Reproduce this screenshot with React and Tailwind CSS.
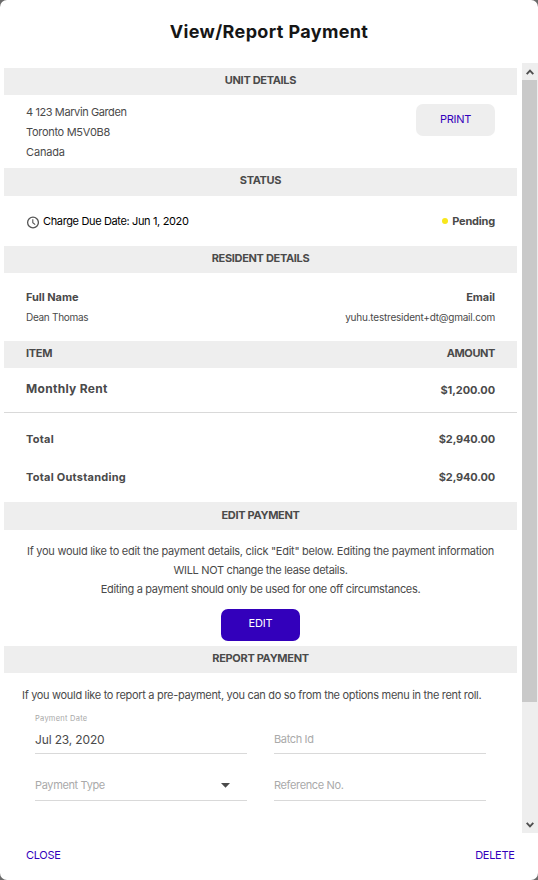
import React, { useState } from 'react';
import clsx from 'clsx';

const SectionBar = ({ children, className }) => (
  <div
    className={clsx(
      'flex items-center bg-[#eeeeee] text-[11px] font-bold tracking-[-0.32px]',
      className
    )}
  >
    {children}
  </div>
);

const Field = ({ label, floating, value, caret, className }) => (
  <div className={clsx('flex flex-col justify-end border-b border-[#d9d9d9]', className)}>
    {floating && (
      <span className="text-[7.5px] leading-[10px] tracking-[0.25px] text-[#a8a8a8]">{floating}</span>
    )}
    {value ? (
      <span className="pt-[8px] pb-[5px] text-[12px] leading-4 tracking-[-0.15px] text-[#4a4a4a]">{value}</span>
    ) : (
      <span className="flex items-center justify-between pr-[17px] text-[11px] leading-4 tracking-[-0.36px] text-[#aaaaaa]">
        {label}
        {caret && (
          <svg width="9" height="5" viewBox="0 0 9 5" fill="#4a4a4a">
            <path d="M0 0h9L4.5 4.8z" />
          </svg>
        )}
      </span>
    )}
  </div>
);

const Scrollbar = () => (
  <div className="flex w-4 flex-col bg-[#eeeeee]">
    <div className="flex h-[17px] items-center justify-center pt-px pr-px">
      <svg width="8" height="6" viewBox="0 0 8 6" fill="none" stroke="#505050" strokeWidth="1.9">
        <path d="M0.7 5.2L4 1.7L7.3 5.2" />
      </svg>
    </div>
    <div className="mr-px h-[622px] bg-[#c9c9c9]" />
    <div className="mt-auto flex h-[17px] items-center justify-center pr-px">
      <svg width="8" height="6" viewBox="0 0 8 6" fill="none" stroke="#505050" strokeWidth="1.9">
        <path d="M0.7 0.8L4 4.3L7.3 0.8" />
      </svg>
    </div>
  </div>
);

const App = () => {
  const [date] = useState('Jul 23, 2020');

  return (
    <div className="h-[880px] w-[538px] bg-[#6b6b6b] font-['Inter',sans-serif]">
      <div className="flex h-full flex-col overflow-hidden rounded-[7px] bg-white text-[11px] tracking-[-0.3px] text-[#4a4a4a]">
        <h1 className="flex h-[63px] items-center justify-center text-[18px] font-bold tracking-[0.36px] text-[#161616]">
          View/Report Payment
        </h1>

        <div className="flex h-[770px]">
          <div className="flex-1 overflow-hidden pt-[5px] pr-[5px] pl-1">
            <SectionBar className="h-[27px] justify-center pb-[3px]">UNIT DETAILS</SectionBar>
            <div className="flex h-[73px] justify-between pt-[7px] pr-[22px] pl-[22px]">
              <div className="leading-5">
                <p className="tracking-[-0.4px]">4 123 Marvin Garden</p>
                <p>Toronto M5V0B8</p>
                <p className="tracking-[-0.15px]">Canada</p>
              </div>
              <button className="mt-[2px] h-8 w-[79px] rounded-[7px] bg-[#eeeeee] pb-[2px] text-[#3300bb]">
                PRINT
              </button>
            </div>

            <SectionBar className="h-[28px] justify-center pb-[3px]">STATUS</SectionBar>
            <div className="flex h-[50px] items-center justify-between px-[22px]">
              <div className="flex items-center tracking-[-0.36px] text-black">
                <svg className="mt-[2px] mr-[4px]" width="13" height="13" viewBox="0 0 13 13" fill="none" stroke="#555555">
                  <circle cx="7" cy="6.5" r="5.4" strokeWidth="1.3" />
                  <path d="M6.8 3.2V6.7L9.2 8.6" strokeWidth="1.1" />
                </svg>
                Charge Due Date: Jun 1, 2020
              </div>
              <div className="flex items-center gap-1 font-bold tracking-[-0.2px]">
                <span className="size-[6px] rounded-full bg-[#f8e71c]" />
                Pending
              </div>
            </div>

            <SectionBar className="h-[27px] justify-center pb-[3px]">RESIDENT DETAILS</SectionBar>
            <div className="flex h-[68px] justify-between px-[22px] pt-[14px] leading-5">
              <div>
                <p className="font-bold tracking-[-0.05px]">Full Name</p>
                <p className="text-[10px]">Dean Thomas</p>
              </div>
              <div className="text-right">
                <p className="font-bold tracking-[-0.05px]">Email</p>
                <p className="text-[10px] tracking-[-0.22px]">yuhu.testresident+dt@gmail.com</p>
              </div>
            </div>

            <SectionBar className="h-[27px] justify-between px-[22px] pb-[3px]">
              <span>ITEM</span>
              <span className="tracking-[-0.4px]">AMOUNT</span>
            </SectionBar>
            <div className="flex h-[45px] justify-between border-b border-[#d9d9d9] px-[22px] pt-[11px] font-bold">
              <span className="text-[12px] leading-5 tracking-[0.3px]">Monthly Rent</span>
              <span className="leading-[22px] tracking-[-0.08px]">$1,200.00</span>
            </div>
            <div className="flex h-[89px] flex-col gap-[18px] px-[22px] pt-4 font-bold leading-5 tracking-[0.25px]">
              <div className="flex justify-between">
                <span>Total</span>
                <span className="tracking-[-0.15px]">$2,940.00</span>
              </div>
              <div className="flex justify-between">
                <span>Total Outstanding</span>
                <span className="tracking-[-0.15px]">$2,940.00</span>
              </div>
            </div>

            <SectionBar className="h-[28px] justify-center pb-px">EDIT PAYMENT</SectionBar>
            <div className="flex h-[116px] flex-col items-center pt-3 text-center">
              <div className="leading-[19px] tracking-[-0.33px] whitespace-nowrap">
                <p className="tracking-[-0.27px]">If you would like to edit the payment details, click "Edit" below. Editing the payment information</p>
                <p>WILL NOT change the lease details.</p>
                <p>Editing a payment should only be used for one off circumstances.</p>
              </div>
              <button className="mt-[10px] h-8 w-[79px] shrink-0 rounded-[7px] bg-[#3300bb] pb-[3px] tracking-[-0.1px] text-white">
                EDIT
              </button>
            </div>

            <SectionBar className="h-[27px] justify-center pb-[3px]">REPORT PAYMENT</SectionBar>
            <p className="pt-3 pl-[18px] leading-5 tracking-[-0.315px] whitespace-nowrap">
              If you would like to report a pre-payment, you can do so from the options menu in the rent roll.
            </p>
            <div className="grid grid-cols-[212px_212px] gap-x-[27px] pl-[31px]">
              <Field className="h-[49px]" floating="Payment Date" value={date} />
              <Field className="h-[49px] pb-[6px]" label="Batch Id" />
              <Field className="h-[47px] pb-[7px]" label="Payment Type" caret />
              <Field className="h-[47px] pb-[7px]" label="Reference No." />
            </div>
          </div>
          <Scrollbar />
        </div>

        <div className="flex h-[47px] items-center justify-between pr-[23.5px] pb-[2px] pl-[26px] text-[#3300bb]">
          <button>CLOSE</button>
          <button>DELETE</button>
        </div>
      </div>
    </div>
  );
};

export default App;
